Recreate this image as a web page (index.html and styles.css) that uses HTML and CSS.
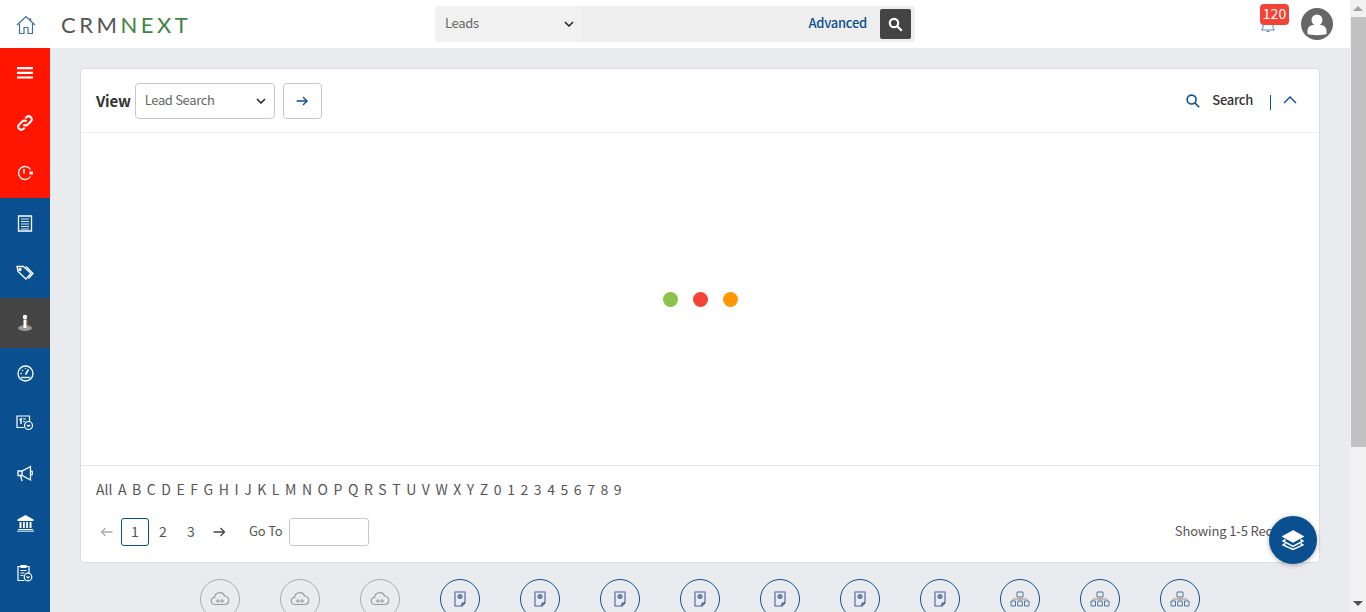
FILE: index.html
```html
<!DOCTYPE html>
<html lang="en">
<head>
    <meta charset="UTF-8">
    <title>CRMNEXT - Leads</title>
    <link rel="stylesheet" href="styles.css">
</head>
<body>
    <svg class="sprites" xmlns="http://www.w3.org/2000/svg">
        <symbol id="i-cloud" viewBox="0 0 20 16">
            <path d="M5 13.500a3.600 3.600 0 0 1-.4-7.200A5.200 5.200 0 0 1 14.600 5a4.300 4.300 0 0 1 .6 8.500z" fill="none" stroke="currentColor" stroke-width="1.200"/>
            <path d="M6.500 10h7M8.500 8l-2 2 2 2M11.500 8l2 2-2 2" fill="none" stroke="currentColor"/>
        </symbol>
        <symbol id="i-doc" viewBox="0 0 12 16">
            <path d="M1 1h10v11l-3 3H1z" fill="none" stroke="#5b5aa5" stroke-width="1.100"/>
            <path d="M8 15v-3h3" fill="none" stroke="#0a5091"/>
            <circle cx="6" cy="5.500" r="2.600" fill="#5f87a8"/>
        </symbol>
        <symbol id="i-tree" viewBox="0 0 20 16">
            <path d="M7 1h6v5H7zM1 10h4.500v5H1zM7.800 10h4.500v5H7.800zM14.500 10H19v5h-4.500z" fill="none" stroke="#4d78a8"/>
            <path d="M10 6v4M3.200 10V8h13.600v2" fill="none" stroke="#b58a80"/>
        </symbol>
    </svg>

    <div class="shell">
        <div class="page">
            <header class="topbar">
                <a class="home-link" href="#">
                    <svg width="20" height="20" viewBox="0 0 20 20" fill="none" stroke="#3f6f9f" stroke-width="1.200">
                        <path d="M1 10 10 1.500 19 10"/>
                        <path d="M3.500 8.500V18.500H8V12.500H12V18.500H16.500V8.500"/>
                        <path d="M14.500 3v3"/>
                    </svg>
                </a>
                <div class="logo"><span class="logo-grey">CRM</span><span class="logo-green">NEXT</span></div>
                <div class="quick-search">
                    <div class="module-select">
                        <span>Leads</span>
                        <svg class="chevron" width="10" height="6" viewBox="0 0 10 6"><path d="M1 1l4 4 4-4"/></svg>
                    </div>
                    <a class="advanced" href="#">Advanced</a>
                    <button class="search-btn">
                        <svg width="15" height="15" viewBox="0 0 15 15" fill="none" stroke="#fff" stroke-width="2.200">
                            <circle cx="6" cy="6" r="4.200"/>
                            <path d="M9.200 9.200 13.800 13.800"/>
                        </svg>
                    </button>
                </div>
                <div class="top-right">
                    <div class="bell">
                        <svg width="16" height="18" viewBox="0 0 16 18" fill="none" stroke="#5d86b5">
                            <path d="M3 12V7a5 5 0 0 1 10 0v5l1.500 2h-13z"/>
                            <path d="M6.500 15.500h3"/>
                        </svg>
                        <span class="badge">120</span>
                    </div>
                    <div class="avatar">
                        <svg width="32" height="32" viewBox="0 0 32 32">
                            <circle cx="16" cy="16" r="16" fill="#666"/>
                            <circle cx="16" cy="12" r="5.500" fill="#fff"/>
                            <path d="M6.500 26v-3c0-4 3-6 6-6h7c3 0 6 2 6 6v3c-3 1.500-16 1.500-19 0z" fill="#fff"/>
                        </svg>
                    </div>
                </div>
            </header>

            <div class="body-row">
                <nav class="sidebar">
                    <a class="nav-item red" href="#">
                        <svg width="16" height="12" viewBox="0 0 16 12" fill="#fff"><path d="M0 0h16v2.200H0zM0 4.700h16v2.200H0zM0 9.400h16v2.200H0z"/></svg>
                    </a>
                    <a class="nav-item red" href="#">
                        <svg width="18" height="18" viewBox="0 0 18 18" fill="none" stroke="#fff" stroke-width="2">
                            <path d="M7.500 10.500a3 3 0 0 0 4.300 0l3-3a3 3 0 0 0-4.300-4.300L9.300 4.400"/>
                            <path d="M10.500 7.500a3 3 0 0 0-4.300 0l-3 3a3 3 0 0 0 4.300 4.300l1.200-1.200"/>
                        </svg>
                    </a>
                    <a class="nav-item red" href="#">
                        <svg width="18" height="18" viewBox="0 0 18 18" fill="none" stroke="#fff" stroke-width="1.300">
                            <path d="M14.500 12.500A6.500 6.500 0 1 1 14.500 5.500"/>
                            <path d="M8 5v4.500" stroke-width="1.500"/>
                            <path d="M13.500 7.500h3.500v3h-3.500z" fill="#fff" stroke="none"/>
                        </svg>
                    </a>
                    <a class="nav-item" href="#">
                        <svg width="16" height="18" viewBox="0 0 16 18" fill="none" stroke="#fff" stroke-width="1.300">
                            <path d="M1.500 2h13v15h-13z"/>
                            <path d="M4 5h8M4 7.500h8M4 10h8M4 12.500h8M4 15h8" stroke="#dbe7f3" stroke-width="1.200"/>
                        </svg>
                    </a>
                    <a class="nav-item" href="#">
                        <svg width="18" height="16" viewBox="0 0 18 16" fill="none" stroke="#fff" stroke-width="1.300">
                            <path d="M1 1.500h6.500l7.500 7-5 5.500-8-7.500z"/>
                            <path d="M10 1.500l7 7-4.500 5"/>
                            <circle cx="4" cy="4.500" r="1"/>
                        </svg>
                    </a>
                    <a class="nav-item dark" href="#">
                        <svg width="16" height="18" viewBox="0 0 16 18">
                            <ellipse cx="8" cy="14" rx="7" ry="3" fill="#9a9a9a"/>
                            <circle cx="8" cy="3" r="2.200" fill="#fff"/>
                            <path d="M6.500 5.500h3V14h-3z" fill="#fff"/>
                            <path d="M9.500 6h.8v7h-.8z" fill="#d98c3a"/>
                        </svg>
                    </a>
                    <a class="nav-item" href="#">
                        <svg width="17" height="17" viewBox="0 0 17 17" fill="none" stroke="#fff" stroke-width="1.300">
                            <circle cx="8.500" cy="8.500" r="7.500"/>
                            <path d="M8.500 9.500 11.500 4.500" stroke-width="1.600"/>
                            <path d="M3.500 8.500h1.500M5 5l1 1M8.500 3v1M4 12.500h9" stroke="#dbe7f3"/>
                        </svg>
                    </a>
                    <a class="nav-item" href="#">
                        <svg width="18" height="16" viewBox="0 0 18 16" fill="none" stroke="#fff" stroke-width="1.200">
                            <path d="M8 12.500H1V1h12.500v6"/>
                            <path d="M3.500 5 5 3.800V9" stroke-width="1.500"/>
                            <path d="M7 4h3M7 6.500h2"/>
                            <circle cx="12.500" cy="10.500" r="4"/>
                            <path d="M10.800 9.800 12.500 11.500 14.200 9.800"/>
                        </svg>
                    </a>
                    <a class="nav-item" href="#">
                        <svg width="16" height="17" viewBox="0 0 16 17" fill="none" stroke="#fff" stroke-width="1.300">
                            <path d="M1 6v4.500h4L13.500 15V1.500L5 6z"/>
                            <path d="M5 6v4.500M3.500 10.500 5 16"/>
                            <path d="M13.500 6.500h2v3h-2" stroke="#dbe7f3"/>
                        </svg>
                    </a>
                    <a class="nav-item" href="#">
                        <svg width="17" height="17" viewBox="0 0 17 17" fill="#fff">
                            <path d="M8.500 0 16.500 4.500V6H.5V4.500z"/>
                            <path d="M2.500 7h2v6h-2zM6 7h1.800v6H6zM9.200 7H11v6H9.200zM12.500 7h2v6h-2z"/>
                            <path d="M1 14h15v1H1z"/>
                            <path d="M0 15.500h17V17H0z" fill="#a9c3dc"/>
                        </svg>
                    </a>
                    <a class="nav-item" href="#">
                        <svg width="16" height="18" viewBox="0 0 16 18" fill="none" stroke="#fff" stroke-width="1.200">
                            <path d="M7.500 16.500H1V2.500h11V9"/>
                            <path d="M4 1.500h5v2H4zM3.500 6.500h6M3.500 9h4M3.500 11.500h3"/>
                            <circle cx="11" cy="13" r="3.800"/>
                            <path d="M9.500 12.300 11 13.800 12.500 12.300"/>
                        </svg>
                    </a>
                    <div class="nav-rest"></div>
                </nav>

                <main class="content">
                    <section class="card">
                        <div class="card-head">
                            <span class="view-label">View</span>
                            <div class="view-select">
                                <span>Lead Search</span>
                                <svg class="chevron" width="10" height="6" viewBox="0 0 10 6"><path d="M1 1l4 4 4-4"/></svg>
                            </div>
                            <button class="go-btn">
                                <svg width="12" height="10" viewBox="0 0 12 10" fill="none" stroke="#0a5091" stroke-width="1.400"><path d="M.5 5h10M7 1l4 4-4 4"/></svg>
                            </button>
                            <a class="search-toggle" href="#">
                                <svg width="14" height="14" viewBox="0 0 15 15" fill="none" stroke="#0a5091" stroke-width="1.700">
                                    <circle cx="6" cy="6" r="4.800"/>
                                    <path d="M9.500 9.500 14.200 14.200"/>
                                </svg>
                                <span>Search</span>
                            </a>
                            <span class="head-sep"></span>
                            <svg class="collapse" width="14" height="8" viewBox="0 0 14 8" fill="none" stroke="#0a5091" stroke-width="1.400"><path d="M1 7l6-6 6 6"/></svg>
                        </div>

                        <div class="card-body">
                            <span class="dot green"></span>
                            <span class="dot redd"></span>
                            <span class="dot orange"></span>
                        </div>

                        <div class="card-foot">
                            <div class="alpha">
                                <a href="#">All</a><a href="#">A</a><a href="#">B</a><a href="#">C</a><a href="#">D</a><a href="#">E</a><a href="#">F</a><a href="#">G</a><a href="#">H</a><a href="#">I</a><a href="#">J</a><a href="#">K</a><a href="#">L</a><a href="#">M</a><a href="#">N</a><a href="#">O</a><a href="#">P</a><a href="#">Q</a><a href="#">R</a><a href="#">S</a><a href="#">T</a><a href="#">U</a><a href="#">V</a><a href="#">W</a><a href="#">X</a><a href="#">Y</a><a href="#">Z</a><a href="#">0</a><a href="#">1</a><a href="#">2</a><a href="#">3</a><a href="#">4</a><a href="#">5</a><a href="#">6</a><a href="#">7</a><a href="#">8</a><a href="#">9</a>
                            </div>
                            <div class="pager">
                                <svg class="pg-arrow" width="13" height="10" viewBox="0 0 13 10" fill="none" stroke="#aaa" stroke-width="1.300"><path d="M12.500 5h-11M5.500 1l-4 4 4 4"/></svg>
                                <span class="pg-num current">1</span>
                                <span class="pg-num">2</span>
                                <span class="pg-num">3</span>
                                <svg class="pg-arrow" width="13" height="10" viewBox="0 0 13 10" fill="none" stroke="#444" stroke-width="1.300"><path d="M.5 5h11M7.500 1l4 4-4 4"/></svg>
                                <span class="goto-label">Go To</span>
                                <input class="goto-input" type="text">
                                <span class="showing">Showing 1-5 Records</span>
                            </div>
                        </div>
                    </section>

                    <div class="shortcuts">
                        <span class="shortcut off"><svg width="20" height="16"><use href="#i-cloud"/></svg></span>
                        <span class="shortcut off"><svg width="20" height="16"><use href="#i-cloud"/></svg></span>
                        <span class="shortcut off"><svg width="20" height="16"><use href="#i-cloud"/></svg></span>
                        <span class="shortcut"><svg width="12" height="16"><use href="#i-doc"/></svg></span>
                        <span class="shortcut"><svg width="12" height="16"><use href="#i-doc"/></svg></span>
                        <span class="shortcut"><svg width="12" height="16"><use href="#i-doc"/></svg></span>
                        <span class="shortcut"><svg width="12" height="16"><use href="#i-doc"/></svg></span>
                        <span class="shortcut"><svg width="12" height="16"><use href="#i-doc"/></svg></span>
                        <span class="shortcut"><svg width="12" height="16"><use href="#i-doc"/></svg></span>
                        <span class="shortcut"><svg width="12" height="16"><use href="#i-doc"/></svg></span>
                        <span class="shortcut"><svg width="20" height="16"><use href="#i-tree"/></svg></span>
                        <span class="shortcut"><svg width="20" height="16"><use href="#i-tree"/></svg></span>
                        <span class="shortcut"><svg width="20" height="16"><use href="#i-tree"/></svg></span>
                    </div>
                </main>
            </div>
        </div>

        <div class="scrollbar">
            <span class="sb-up"></span>
            <span class="sb-thumb"></span>
            <span class="sb-down"></span>
        </div>
    </div>

    <button class="fab">
        <svg width="22" height="20" viewBox="0 0 22 20" fill="none" stroke="#fff" stroke-width="1.500">
            <path d="M11 1 21 6.500 11 12 1 6.500z" fill="#fff"/>
            <path d="M3.500 9.500 1 11l10 5.500L21 11l-2.500-1.500"/>
            <path d="M3.500 13.500 1 15l10 4.500L21 15l-2.500-1.500"/>
        </svg>
    </button>
</body>
</html>
```

FILE: styles.css
```css
* { box-sizing: border-box; }
html, body {
    margin: 0;
    height: 100%;
    overflow: hidden;
}
body {
    font-family: "Noto Sans CJK SC", "Noto Sans", sans-serif;
    font-size: 14px;
    color: #555;
    background: #e9ebef;
}
a { color: inherit; text-decoration: none; }
button { font: inherit; cursor: pointer; }
.sprites { display: none; }

.shell { display: flex; height: 612px; }
.page { flex: 1; display: flex; flex-direction: column; min-width: 0; }

/* top bar */
.topbar {
    height: 48px;
    background: #fff;
    display: flex;
    align-items: center;
    position: relative;
    flex: none;
}
.home-link { width: 50px; display: flex; justify-content: center; padding: 1px 0 0 2px; }
.logo {
    margin-left: 11px;
    font-family: "Lato", sans-serif;
    font-size: 22px;
    letter-spacing: 3.5px;
    width: 374px;
    white-space: nowrap;
}
.logo-grey { color: #555; }
.logo-green { color: #3f8445; }
.quick-search {
    width: 480px;
    height: 36px;
    background: #eee;
    border-radius: 4px;
    display: flex;
    align-items: center;
    padding-right: 4px;
}
.module-select {
    width: 146px;
    height: 36px;
    background: #f1f1f1;
    border-radius: 4px;
    display: flex;
    align-items: center;
    justify-content: space-between;
    padding: 0 7px 0 10px;
    color: #666;
    font-size: 13px;
    letter-spacing: -.3px;
}
.module-select span { margin-bottom: 4px; }
.chevron { fill: none; stroke: #222; stroke-width: 1.500; }
.advanced {
    margin-left: auto;
    margin-right: 13px;
    margin-bottom: 3px;
    color: #0a5091;
    font-weight: 500;
    font-size: 13px;
    letter-spacing: -.25px;
}
.search-btn {
    width: 31px;
    height: 30px;
    border: none;
    border-radius: 2px;
    background: #444;
    display: flex;
    align-items: center;
    justify-content: center;
    padding: 0;
}
.top-right {
    margin-left: auto;
    display: flex;
    align-items: center;
    gap: 25px;
    padding-right: 17px;
}
.bell { position: relative; height: 18px; width: 16px; margin-top: 2px; }
.badge {
    position: absolute;
    top: -12px;
    left: 0;
    width: 29px;
    height: 21px;
    background: #f44336;
    border-radius: 4px;
    color: #fff;
    font-size: 14px;
    line-height: 19px;
    text-align: center;
}
.avatar { width: 32px; height: 32px; }

.body-row { flex: 1; display: flex; min-height: 0; }

/* left nav */
.sidebar { width: 50px; flex: none; display: flex; flex-direction: column; background: #0a5091; }
.nav-item {
    height: 50px;
    flex: none;
    display: flex;
    align-items: center;
    justify-content: center;
    background: #0a5091;
}
.nav-item.red { background: #ff1500; }
.nav-item.dark { background: #444; }
.nav-rest { flex: 1; }

/* main */
.content { flex: 1; min-width: 0; padding: 20px 30px 0; overflow: hidden; }
.card {
    height: 495px;
    background: #fff;
    border: 1px solid #dcdcdc;
    border-radius: 4px;
    display: flex;
    flex-direction: column;
}
.card-head {
    height: 64px;
    flex: none;
    display: flex;
    align-items: center;
    padding: 0 22px 0 15px;
    border-bottom: 1px solid #f2f2f2;
}
.view-label { font-size: 15px; font-weight: 700; color: #333; margin: 0 4px 1px 0; letter-spacing: -.2px; }
.view-select {
    width: 140px;
    height: 36px;
    border: 1px solid #c8c8c8;
    border-radius: 4px;
    display: flex;
    align-items: center;
    justify-content: space-between;
    padding: 0 8px 0 9px;
    color: #666;
    font-size: 13px;
    letter-spacing: -.33px;
}
.view-select span { margin-bottom: 2px; }
.go-btn {
    width: 39px;
    height: 36px;
    margin-left: 8px;
    background: #fff;
    border: 1px solid #c8c8c8;
    border-radius: 4px;
    display: flex;
    align-items: center;
    justify-content: center;
    padding: 0;
}
.search-toggle {
    margin-left: auto;
    display: flex;
    align-items: center;
    gap: 12px;
    color: #333;
    font-size: 13px;
    font-weight: 500;
    letter-spacing: -.3px;
}
.search-toggle span { margin-bottom: 2px; }
.head-sep { width: 1px; height: 15px; background: #0a5091; margin: 3px 12px 0 17px; }
.collapse { margin-bottom: 2px; }

.card-body {
    flex: 1;
    display: flex;
    align-items: center;
    justify-content: center;
    gap: 15px;
    padding-top: 1px;
}
.dot { width: 15px; height: 15px; border-radius: 50%; }
.dot.green { background: #8bc34a; }
.dot.redd { background: #f44336; }
.dot.orange { background: #ff9800; }

.card-foot { height: 97px; flex: none; border-top: 1px solid #e8e8e8; padding: 0 15px; }
.alpha { height: 48px; display: flex; align-items: center; padding-bottom: 2px; }
.alpha a { margin-right: 5.55px; color: #555; }
.pager { height: 36px; display: flex; align-items: center; }
.pg-arrow { margin: 0 4px; }
.pg-num { width: 28px; height: 28px; line-height: 24px; text-align: center; border: 1px solid transparent; border-radius: 3px; }
.pg-num.current { border-color: #0a5091; margin-left: 4px; }
.pg-num + .pg-arrow { margin-left: 8px; }
.goto-label { margin: 0 0 3px 19px; font-size: 13px; letter-spacing: -.2px; }
.goto-input {
    width: 80px;
    height: 28px;
    margin-left: 7px;
    border: 1px solid #c8c8c8;
    border-radius: 3px;
    background: #fff;
}
.showing { margin: 0 6px 4px auto; white-space: nowrap; font-size: 13px; letter-spacing: -.15px; }

/* shortcut circles, cut off by the window */
.shortcuts { display: flex; gap: 40px; padding: 16px 0 0 120px; }
.shortcut {
    width: 40px;
    height: 40px;
    flex: none;
    border: 1px solid #0a5091;
    border-radius: 50%;
    display: flex;
    align-items: center;
    justify-content: center;
    padding-bottom: 1px;
}
.shortcut.off { border-color: #aaa; color: #999; }

/* window scrollbar */
.scrollbar {
    width: 16px;
    flex: none;
    background: #f1f1f1;
    display: flex;
    flex-direction: column;
    align-items: center;
}
.sb-up, .sb-down {
    width: 0;
    height: 0;
    flex: none;
    border-left: 5px solid transparent;
    border-right: 5px solid transparent;
}
.sb-up { border-bottom: 5px solid #a3a3a3; margin-top: 6px; }
.sb-thumb { width: 15px; height: 430px; margin-top: 6px; background: #c1c1c1; flex: none; }
.sb-down { border-top: 5px solid #505050; margin-top: auto; margin-bottom: 6px; }

.fab {
    position: fixed;
    left: 1269px;
    top: 516px;
    width: 48px;
    height: 48px;
    border: none;
    border-radius: 50%;
    background: #0a5091;
    box-shadow: 0 1px 5px rgba(0, 0, 0, .3);
    display: flex;
    align-items: center;
    justify-content: center;
    padding: 0;
}
```
